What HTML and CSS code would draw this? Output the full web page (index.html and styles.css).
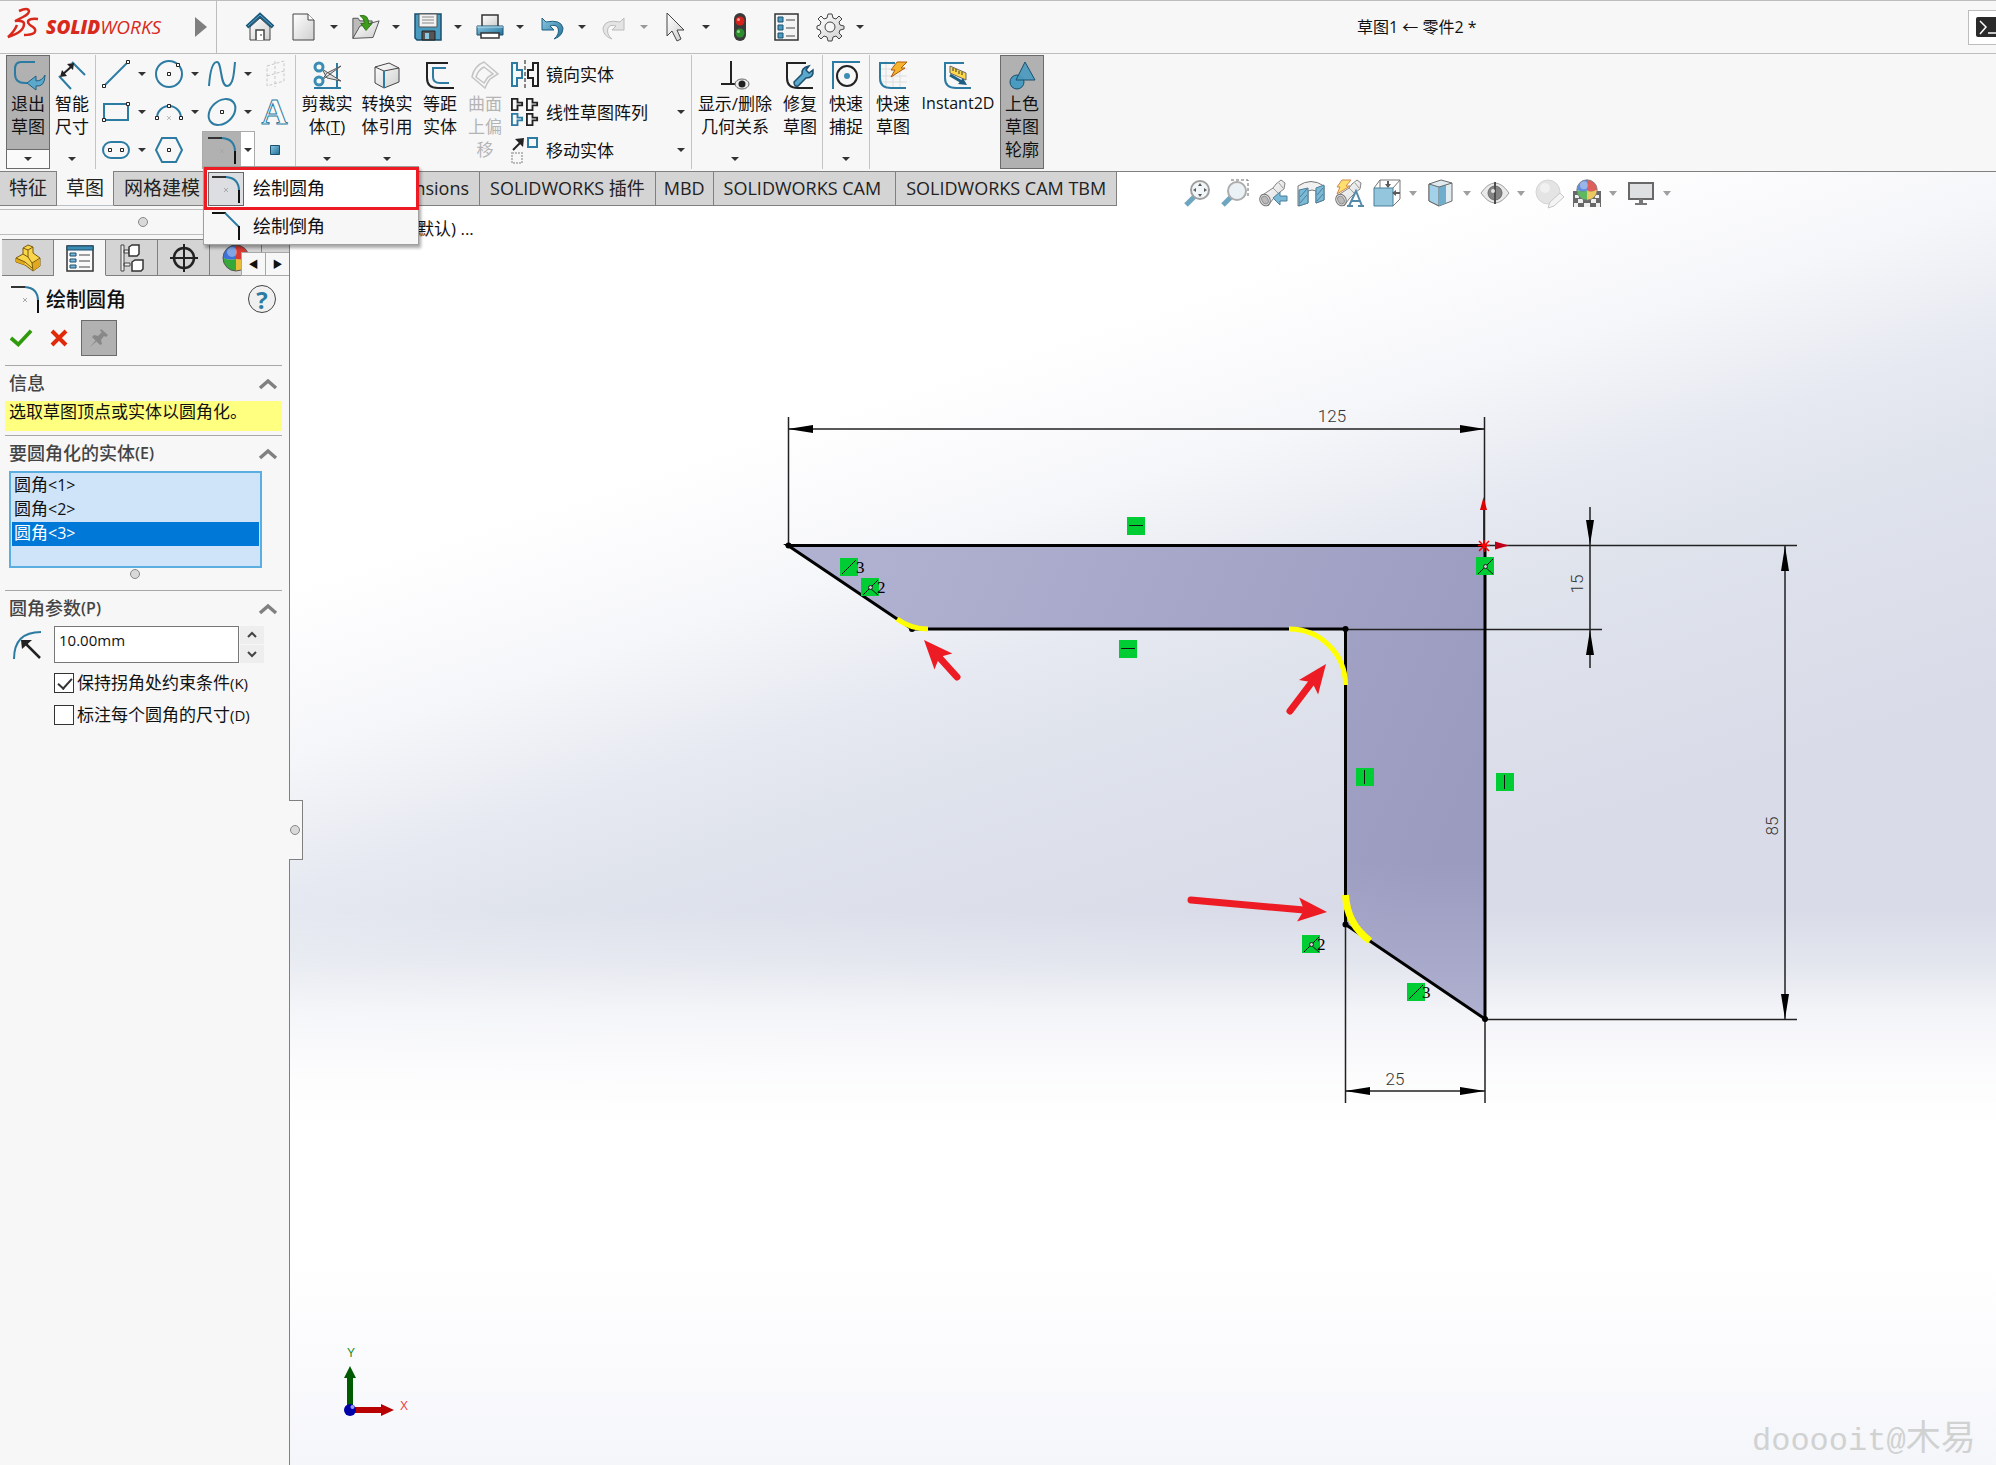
FILE: index.html
```html
<!DOCTYPE html>
<html lang="zh-CN">
<head>
<meta charset="utf-8">
<title>草图1 ← 零件2 *</title>
<link rel="stylesheet" href="styles.css">
</head>
<body>
<svg class="defs" aria-hidden="true">
  <defs>
    <linearGradient id="blue" x1="0" y1="0" x2="1" y2="1"><stop offset="0" stop-color="#8cc8e4"/><stop offset="1" stop-color="#1f6f96"/></linearGradient>
    <linearGradient id="grey" x1="0" y1="0" x2="1" y2="1"><stop offset="0" stop-color="#ffffff"/><stop offset="1" stop-color="#cfcfcf"/></linearGradient>
    <symbol id="i-fillet" viewBox="0 0 28 28"><path d="M0 2h14" stroke="#333" stroke-width="2" fill="none"/><path d="M14 2q13 1 13 14" stroke="#2b7ba3" stroke-width="2" fill="none"/><path d="M27 15v13" stroke="#111" stroke-width="2"/><path d="M12 13l4 4m0-4l-4 4" stroke="#a8a8a8"/></symbol>
    <symbol id="i-block" viewBox="0 0 14 14"><path d="M1 1h6v4h5v3H7v5H1z" fill="none" stroke-width="2" stroke="currentColor"/></symbol>
    <symbol id="i-scope" viewBox="0 0 28 28"><path d="M2 17L14 9l3-4 5-4 4 3-1 6-4 3-7 7-5 7z" fill="url(#grey)" stroke="#666"/><path d="M14 9l6 6M20 4l4 5" stroke="#888" fill="none"/><ellipse cx="6" cy="21" rx="5" ry="6" transform="rotate(-30 6 21)" fill="#ddd" stroke="#555"/><ellipse cx="6" cy="21" rx="3" ry="4" transform="rotate(-30 6 21)" fill="#aaa" stroke="#777"/></symbol>
    <symbol id="i-ball" viewBox="0 0 28 28"><path d="M14 1A13 13 0 0 0 1 14q6 3 13 1z" fill="#3d73d8"/><path d="M14 1a13 13 0 0 1 13 13q-6 3-13 1z" fill="#d63a32"/><path d="M1 14a13 13 0 0 0 13 13V15q-7 2-13-1z" fill="#36a83a"/><path d="M27 14a13 13 0 0 1-13 13V15q7 2 13-1z" fill="#e9bc3a"/><circle cx="10" cy="8" r="5" fill="#fff" opacity=".35"/><circle cx="14" cy="14" r="13" fill="none" stroke="#555"/></symbol>
  </defs>
</svg>

<div class="app">
  <header class="titlebar">
    <div class="brand">
      <svg class="brand-mark" viewBox="0 0 32 32"><path d="M11 3Q20-1 21 3q0 3-6 6l-8 4q9-1 9 3 0 8-16 13 6-5 9-12M30 11q-10-1-10 3 0 2 5 5 4 3 1 6-3 2-10 2" fill="none" stroke="#d9291c" stroke-width="2.500"/></svg>
      <span class="brand-name"><b>SOLID</b><span>WORKS</span></span>
      <button class="brand-more" aria-label="菜单"></button>
    </div>
    <nav class="quick">
      <button class="ico solo" aria-label="主页"><svg viewBox="0 0 28 28"><path d="M4 14v13h20V14L14 5z" fill="url(#grey)" stroke="#444"/><path d="M1 14L14 2l13 12" fill="none" stroke="#1d5a7d" stroke-width="4"/><path d="M2 13L14 2l12 11" fill="none" stroke="#5aa9cc" stroke-width="1"/><path d="M10 27V17h8v10" fill="#fff" stroke="#444" stroke-width="1.5"/><path d="M15 21v2" stroke="#333"/></svg></button>
      <div class="pair"><button class="ico" aria-label="新建"><svg viewBox="0 0 28 28"><path d="M3 1h15l6 6v20H3z" fill="url(#grey)" stroke="#444"/><path d="M18 1v6h6" fill="#fff" stroke="#444"/></svg></button><button class="caret" aria-label="更多"></button></div>
      <div class="pair"><button class="ico" aria-label="打开"><svg viewBox="0 0 32 28"><path d="M1 27V4h6l2 3h14v5" fill="#bbb" stroke="#444"/><path d="M1 27L9 13l22-6-7 19z" fill="url(#grey)" stroke="#444"/><path d="M9 1q10-2 10 9h4l-7 8-6-8h4q0-6-5-9z" fill="#3e9c1d" stroke="#2b6e12"/></svg></button><button class="caret" aria-label="更多"></button></div>
      <div class="pair"><button class="ico" aria-label="保存"><svg viewBox="0 0 28 28"><path d="M1 1h26v26H3l-2-2z" fill="#4a9bc0" stroke="#1b4f6e" stroke-width="1.5"/><path d="M5 1h18v13H5z" fill="#f2f2f2" stroke="#555"/><path d="M8 4h12M8 7h12M8 10h12" stroke="#888"/><path d="M8 18h13v9H8z" fill="#555" stroke="#222"/><path d="M11 20h4v6h-4z" fill="#8cc8e4"/></svg></button><button class="caret" aria-label="更多"></button></div>
      <div class="pair"><button class="ico" aria-label="打印"><svg viewBox="0 0 28 28"><path d="M6 13V2h16v11" fill="url(#grey)" stroke="#333" stroke-width="1.5"/><path d="M1 13h26v9H1z" fill="url(#blue)" stroke="#1b4f6e"/><path d="M1 14h26" stroke="#b7def0"/><path d="M5 20h18v5H5z" fill="#fff" stroke="#333" stroke-width="1.5"/></svg></button><button class="caret" aria-label="更多"></button></div>
      <div class="pair"><button class="ico" aria-label="撤消"><svg viewBox="0 0 28 28"><path d="M4 5v12h12l-4-4q6-2 8 2 2 6-4 11 9-3 9-11Q23 6 8 9z" fill="url(#blue)" stroke="#1f5f82"/></svg></button><button class="caret" aria-label="更多"></button></div>
      <div class="pair off"><button class="ico" aria-label="重做" disabled><svg viewBox="0 0 28 28"><path d="M24 5v12H12l4-4q-6-2-8 2-2 6 4 11-9-3-9-11Q5 6 20 9z" fill="#e4e4e4" stroke="#bbb"/></svg></button><button class="caret" aria-label="更多" disabled></button></div>
      <div class="pair"><button class="ico" aria-label="选择"><svg viewBox="0 0 28 28"><path d="M5 0v23l5-5 5 10 4-2-4-9h7z" fill="url(#grey)" stroke="#444"/></svg></button><button class="caret" aria-label="更多"></button></div>
      <button class="ico solo" aria-label="重建模型"><svg viewBox="0 0 28 28"><rect x="8" y="0" width="12" height="28" rx="6" fill="#3a3a3a"/><circle cx="14" cy="8" r="4.500" fill="#d3231b"/><circle cx="14" cy="20" r="4.500" fill="#2e8b2e"/><circle cx="12.500" cy="6.500" r="1.500" fill="#f49a94"/><circle cx="12.500" cy="18.500" r="1.500" fill="#93d493"/></svg></button>
      <button class="ico solo" aria-label="文件属性"><svg viewBox="0 0 28 28"><path d="M3 1h23v26H3z" fill="#f4f4f4" stroke="#333" stroke-width="1.5"/><path d="M6 4h5v5H6zM6 12h5v5H6zM6 20h5v5H6z" fill="#4a9bc0" stroke="#1b4f6e"/><path d="M14 7h9M14 15h9M14 23h9" stroke="#444"/></svg></button>
      <div class="pair"><button class="ico" aria-label="选项"><svg viewBox="0 0 28 28"><path d="M12 1h4l1 4 3 1 3-3 3 3-3 3 1 3 4 1v3l-4 1-1 3 3 3-3 3-3-3-3 1-1 4h-4l-1-4-3-1-3 3-3-3 3-3-1-3-3-1v-3l3-1 1-3-3-3 3-3 3 3 3-1z" fill="url(#grey)" stroke="#444"/><circle cx="14" cy="14" r="5" fill="#f7f7f7" stroke="#444"/></svg></button><button class="caret" aria-label="更多"></button></div>
    </nav>
    <h1 class="doc-title">草图1 ← 零件2 *</h1>
    <button class="console" aria-label="命令"><svg viewBox="0 0 24 20"><rect width="24" height="20" rx="2" fill="#2a2a2a"/><path d="M4 4l6 6-6 7" fill="none" stroke="#fff" stroke-width="1.5"/><path d="M12 16h8" stroke="#fff" stroke-width="1.5"/></svg></button>
  </header>

  <section class="ribbon">
    <div class="group g-exit">
      <button class="big on split"><svg viewBox="0 0 28 28"><path d="M21 1H7Q1 1 1 8v5q0 9 10 9h2" fill="none" stroke="#2b7ba3" stroke-width="2"/><path d="M13 22l9-7v5q6 0 9-6 0 12-9 11v4z" fill="#5aa9cc" stroke="#1f5f82"/></svg><span>退出</span><span>草图</span><i class="tri"></i></button>
      <button class="big"><svg viewBox="0 0 28 28"><path d="M14 1l13 13M1 15l12 13" stroke="#2b7ba3" stroke-width="2"/><path d="M4 14L14 5" stroke="#222" stroke-width="2"/><path d="M16 2l-1 7-6-6zM2 16l2-7 5 6z" fill="#222"/></svg><span>智能</span><span>尺寸</span><i class="tri"></i></button>
    </div>
    <div class="group tools">
      <div class="tool"><button class="ico" aria-label="直线"><svg viewBox="0 0 28 28"><path d="M2 26L26 2" stroke="#2b7ba3" stroke-width="2"/><path d="M.5 24.500h3v3h-3zM24.500 .5h3v3h-3z" fill="#fff" stroke="#222"/></svg></button><button class="caret" aria-label="更多"></button></div>
      <div class="tool"><button class="ico" aria-label="圆"><svg viewBox="0 0 28 28"><circle cx="14" cy="14" r="13" fill="none" stroke="#2b7ba3" stroke-width="2"/><path d="M12.500 12.500h3v3h-3zM21.500 3.500h3v3h-3z" fill="#fff" stroke="#222"/></svg></button><button class="caret" aria-label="更多"></button></div>
      <div class="tool"><button class="ico" aria-label="样条曲线"><svg viewBox="0 0 28 28"><path d="M1 26C2 12 4 2 9 2s3 24 10 24c6 0 7-12 8-24" fill="none" stroke="#2b7ba3" stroke-width="2"/></svg></button><button class="caret" aria-label="更多"></button></div>
      <div class="tool"><button class="ico" aria-label="基准面"><svg viewBox="0 0 28 28"><path d="M6 6l17-5v20L6 26zM6 16l17-5M14 1v26" fill="none" stroke="#c8c8c8" stroke-dasharray="3 2"/></svg></button></div>
      <div class="tool"><button class="ico" aria-label="矩形"><svg viewBox="0 0 28 28"><path d="M2 6h24v16H2z" fill="none" stroke="#2b7ba3" stroke-width="2"/><path d="M.5 20.500h3v3h-3zM24.500 4.500h3v3h-3z" fill="#fff" stroke="#222"/></svg></button><button class="caret" aria-label="更多"></button></div>
      <div class="tool"><button class="ico" aria-label="圆弧"><svg viewBox="0 0 28 28"><path d="M2 20a12 12 0 0 1 24 0" fill="none" stroke="#2b7ba3" stroke-width="2"/><path d="M.5 18.500h3v3h-3zM24.500 18.500h3v3h-3zM12.500 6.500h3v3h-3z" fill="#fff" stroke="#222"/><path d="M12 18l4 4m0-4l-4 4" stroke="#bbb"/></svg></button><button class="caret" aria-label="更多"></button></div>
      <div class="tool"><button class="ico" aria-label="椭圆"><svg viewBox="0 0 28 28"><ellipse cx="14" cy="14" rx="15" ry="11" transform="rotate(-42 14 14)" fill="none" stroke="#2b7ba3" stroke-width="2"/><path d="M12.500 12.500h3v3h-3z" fill="#fff" stroke="#222"/></svg></button><button class="caret" aria-label="更多"></button></div>
      <div class="tool"><button class="ico glyph" aria-label="文字">A</button></div>
      <div class="tool"><button class="ico" aria-label="槽口"><svg viewBox="0 0 28 28"><rect x="1" y="6" width="26" height="16" rx="8" fill="none" stroke="#2b7ba3" stroke-width="2"/><path d="M6.500 12.500h3v3h-3zM18.500 12.500h3v3h-3z" fill="#fff" stroke="#222"/></svg></button><button class="caret" aria-label="更多"></button></div>
      <div class="tool"><button class="ico" aria-label="多边形"><svg viewBox="0 0 28 28"><path d="M7 2h14l6 12-6 12H7L1 14z" fill="none" stroke="#2b7ba3" stroke-width="2"/><path d="M12.500 12.500h3v3h-3z" fill="#fff" stroke="#222"/></svg></button></div>
      <div class="tool open">
        <button class="ico" aria-label="绘制圆角"><svg><use href="#i-fillet"/></svg></button><button class="caret" aria-label="更多"></button>
        <div class="menu">
          <button class="menu-item marked"><span class="menu-ico"><svg><use href="#i-fillet"/></svg></span>绘制圆角</button>
          <button class="menu-item"><span class="menu-ico"><svg viewBox="0 0 28 28"><path d="M0 1h14" stroke="#111" stroke-width="2"/><path d="M13 1l14 14" stroke="#2b7ba3" stroke-width="2"/><path d="M27 14v14" stroke="#111" stroke-width="2"/></svg></span>绘制倒角</button>
        </div>
      </div>
      <div class="tool"><button class="ico" aria-label="点"><svg viewBox="0 0 28 28"><path d="M9.500 9.500h9v9h-9z" fill="url(#blue)" stroke="#1b4f6e"/></svg></button></div>
    </div>
    <div class="group g-edit">
      <button class="big w60"><svg viewBox="0 0 28 28"><path d="M1 27h27M24 2v26" stroke="#2b7ba3" stroke-width="2"/><path d="M9 8l19 12-14-3zM9 19L28 5 14 12z" fill="#ddd" stroke="#555"/><circle cx="6" cy="6" r="4" fill="none" stroke="#3c8db3" stroke-width="3"/><circle cx="6" cy="20" r="4" fill="none" stroke="#3c8db3" stroke-width="3"/></svg><span>剪裁实</span><span>体(<u>T</u>)</span><i class="tri"></i></button>
      <button class="big w60"><svg viewBox="0 0 28 28"><path d="M2 6l14-4 10 5v14l-15 6-9-5z" fill="url(#grey)" stroke="#444"/><path d="M2 6l9 4 15-3" fill="none" stroke="#444"/><path d="M11 10v17" stroke="#2b7ba3" stroke-width="2"/></svg><span>转换实</span><span>体引用</span><i class="tri"></i></button>
      <button class="big w46"><svg viewBox="0 0 28 28"><path d="M22 2H1v15q0 10 11 10h16" fill="none" stroke="#222" stroke-width="2"/><path d="M20 7H7v9q0 6 7 6h9" fill="none" stroke="#2b7ba3" stroke-width="2"/></svg><span>等距</span><span>实体</span></button>
      <button class="big off" disabled><svg viewBox="0 0 28 28"><path d="M13 1l14 12-8 5q-3 4-5 9L1 16Q3 5 13 1zM13 6l9 7-5 3-4 6-8-6q2-7 8-10z" fill="none" stroke="#c4c4c4" stroke-width="1.5"/></svg><span>曲面</span><span>上偏</span><span>移</span></button>
      <div class="rows">
        <div class="row"><button class="row-main"><svg viewBox="0 0 28 28"><path d="M1 3h5v7h5v8H6v8H1z" fill="none" stroke="#2b7ba3" stroke-width="2"/><path d="M27 3h-5v7h-5v8h5v8h5z" fill="none" stroke="#222" stroke-width="2"/><path d="M14 0v28" stroke="#111" stroke-dasharray="4 2" stroke-width="1"/></svg>镜向实体</button></div>
        <div class="row"><button class="row-main"><svg viewBox="0 0 28 28"><g color="#222"><use href="#i-block" width="13" height="13"/><use href="#i-block" x="15" width="13" height="13"/><use href="#i-block" x="15" y="15" width="13" height="13"/></g><g color="#2b7ba3"><use href="#i-block" y="15" width="13" height="13"/></g></svg>线性草图阵列</button><button class="caret" aria-label="更多"></button></div>
        <div class="row"><button class="row-main"><svg viewBox="0 0 28 28"><path d="M2 14L10 6" stroke="#222" stroke-width="2"/><path d="M13 2l-1 9-8-8z" fill="#222"/><path d="M17 2h9v9h-9z" fill="none" stroke="#2b7ba3" stroke-width="2"/><path d="M1 17h10v10H1z" fill="none" stroke="#bbb" stroke-width="2" stroke-dasharray="2 1"/></svg>移动实体</button><button class="caret" aria-label="更多"></button></div>
      </div>
    </div>
    <div class="group">
      <button class="big w86"><svg viewBox="0 0 28 28"><path d="M10 0v23M0 23h16" stroke="#222" stroke-width="2"/><ellipse cx="21" cy="23" rx="7" ry="5" fill="#eee" stroke="#666"/><circle cx="21" cy="23" r="3.500" fill="#222"/></svg><span>显示/删除</span><span>几何关系</span><i class="tri"></i></button>
      <button class="big"><svg viewBox="0 0 28 28"><path d="M20 2H1v15q0 10 11 10h15" fill="none" stroke="#222" stroke-width="2"/><path d="M8 21l8-8q-1-6 7-8l-3 4 3 3 4-3q1 8-7 8l-8 8q-4 1-4-4z" fill="#5aa9cc" stroke="#1f4f6e" stroke-width="1.500"/></svg><span>修复</span><span>草图</span></button>
    </div>
    <div class="group">
      <button class="big w46"><svg viewBox="0 0 28 28"><path d="M1 28V1h27" fill="none" stroke="#2b7ba3" stroke-width="2"/><circle cx="15" cy="15" r="10" fill="none" stroke="#222" stroke-width="2"/><circle cx="15" cy="15" r="3" fill="#3c8db3"/></svg><span>快速</span><span>捕捉</span><i class="tri"></i></button>
    </div>
    <div class="group last">
      <button class="big w46"><svg viewBox="0 0 28 28"><path d="M0 8h28M0 15h28M0 21h28M7 0v28M14 0v28M21 0v28" stroke="#ddd"/><path d="M16 2H1v15q0 10 11 10h15" fill="none" stroke="#2b7ba3" stroke-width="2"/><path d="M18 1h10l-6 6h4L12 16l4-7h-4z" fill="#f6b42c" stroke="#b05a10"/></svg><span>快速</span><span>草图</span></button>
      <button class="big w84 latin"><svg viewBox="0 0 28 28"><path d="M20 2H1v15q0 10 11 10h15" fill="none" stroke="#2b7ba3" stroke-width="2"/><path d="M6 5l16 7v7L6 12z" fill="#ffd84a" stroke="#666"/><path d="M9 7v3M12 8v3M15 10v3M18 11v3" stroke="#333"/><path d="M6 14l12 7" stroke="#1f5f82" stroke-width="3"/><path d="M23 24l-9-1 5-6z" fill="#1f5f82"/></svg><span>Instant2D</span></button>
      <button class="big on"><svg viewBox="0 0 28 28"><circle cx="9" cy="21" r="7" fill="#4a9bc0" stroke="#1b4f6e"/><path d="M17 1l10 18H8z" fill="#4a9bc0" fill-opacity=".9" stroke="#1b4f6e"/></svg><span>上色</span><span>草图</span><span>轮廓</span></button>
    </div>
  </section>

  <div class="work">
    <div class="tabrow">
      <nav class="tabs">
        <a href="#" class="tab cjk">特征</a><a href="#" class="tab cjk active">草图</a><a href="#" class="tab cjk mesh">网格建模</a><a href="#" class="tab dims">MBD Dimensions</a><a href="#" class="tab">SOLIDWORKS 插件</a><a href="#" class="tab mbd">MBD</a><a href="#" class="tab cam">SOLIDWORKS CAM</a><a href="#" class="tab">SOLIDWORKS CAM TBM</a>
      </nav>
      <div class="hud">
        <button class="ico" aria-label="整屏显示全图"><svg viewBox="0 0 28 28"><path d="M3 26l8-8" stroke="#4a8fb0" stroke-width="5"/><circle cx="17" cy="11" r="9" fill="#eef5f8" stroke="#888" stroke-width="2"/><path d="M17 4l2 3h-4zM17 18l2-3h-4zM10 11l3-2v4zM24 11l-3-2v4z" fill="#333"/></svg></button>
        <button class="ico" aria-label="局部放大"><svg viewBox="0 0 28 28"><path d="M10 1h17v17" fill="none" stroke="#444" stroke-dasharray="3 2"/><path d="M2 26l8-8" stroke="#4a8fb0" stroke-width="5"/><circle cx="16" cy="12" r="9" fill="#e6f0f5" stroke="#999" stroke-width="2"/></svg></button>
        <button class="ico" aria-label="上一视图"><svg viewBox="0 0 28 28"><use href="#i-scope"/><path d="M14 19l7-6v4h7v5h-7v4z" fill="#5aa9cc" stroke="#1f5f82"/></svg></button>
        <button class="ico" aria-label="剖面视图"><svg viewBox="0 0 28 28"><path d="M1 7q13-9 26 0v14l-8 3V12q-4-2-8 0v12l-10 3z" fill="#eee" stroke="#555"/><path d="M2 11l9-2v15l-9 3zM19 9l8-3v15l-8 3z" fill="#5aa9cc" stroke="#1f5f82"/><path d="M3 18l7-8M3 24l7-8M20 16l6-7M20 22l6-7" stroke="#1f5f82"/></svg></button>
        <button class="ico" aria-label="动态注解视图"><svg viewBox="0 0 28 28"><use href="#i-scope"/><path d="M7 1h9l-5 6h4L2 15l3-7H2z" fill="#ffd84a" stroke="#c86a20"/><path d="M14 27l7-15 6 15M17 22h8M12 27h6M23 27h6" fill="none" stroke="#2b6f94" stroke-width="2"/></svg></button>
        <div class="pair"><button class="ico" aria-label="视图定向"><svg viewBox="0 0 28 28"><path d="M1 9l6-8h20v19l-7 7M20 9l7-8M7 1v8" fill="none" stroke="#555"/><path d="M1 9h19v18H1z" fill="#7ab8d6" stroke="#1f5f82"/><path d="M15 2v6M27 14h-6" stroke="#333" stroke-width="2"/><path d="M15 9l-3-4h6zM19 14l4-3v6z" fill="#333"/></svg></button><button class="caret" aria-label="更多"></button></div>
        <div class="pair"><button class="ico" aria-label="显示样式"><svg viewBox="0 0 28 28"><path d="M2 5l12-4 11 3v18l-13 5-10-5z" fill="#d8e6ee" stroke="#444"/><path d="M2 5l10 3v19L2 22z" fill="#8cc8e4" stroke="#444"/><path d="M12 8l7-2v18l-7 3z" fill="#4a9bc0"/><path d="M12 8l13-4" stroke="#444"/></svg></button><button class="caret" aria-label="更多"></button></div>
        <div class="pair"><button class="ico" aria-label="隐藏/显示项目"><svg viewBox="0 0 28 28"><path d="M0 14Q14-6 28 14 14 34 0 14z" fill="#e6e6e6" stroke="#888"/><circle cx="14" cy="14" r="7" fill="#666" stroke="#444"/><path d="M14 3v22" stroke="#222" stroke-width="2"/><circle cx="12" cy="12" r="2" fill="#ddd"/></svg></button><button class="caret" aria-label="更多"></button></div>
        <button class="ico" aria-label="编辑外观" disabled><svg viewBox="0 0 28 28"><circle cx="13" cy="13" r="12" fill="#dedede" stroke="#ccc"/><circle cx="10" cy="9" r="5" fill="#eee"/><path d="M13 29l2-6 10-9 4 4-10 9z" fill="#f2f2f2" stroke="#bbb"/></svg></button>
        <div class="pair"><button class="ico" aria-label="应用布景"><svg viewBox="0 0 28 28"><path d="M0 12h28v16H0z" fill="#444"/><path d="M2 16h4v3H2zM22 16h4v3h-4zM5 20h5v4H5zM18 20h5v4h-5zM11 24h6v4h-6zM1 24h4v4H1zM23 24h4v4h-4z" fill="#eee"/><use href="#i-ball" x="3" y="0" width="22" height="22"/></svg></button><button class="caret" aria-label="更多"></button></div>
        <div class="pair"><button class="ico" aria-label="视图设定"><svg viewBox="0 0 28 28"><path d="M2 4h24v16H2z" fill="#d8dadb" stroke="#444" stroke-width="2"/><path d="M12 20h4v4h4v2H8v-2h4z" fill="#555"/></svg></button><button class="caret" aria-label="更多"></button></div>
      </div>
    </div>

    <div class="body">
      <aside class="panel">
        <div class="grip"><i class="dot"></i></div>
        <div class="ptabs">
          <button class="ptab" aria-label="特征树"><svg viewBox="0 0 28 28"><path d="M2 14l7-4V4l5-3 5 2v6l7 5v8l-7 5-8-6-9-3z" fill="#f9d54a" stroke="#7a5a10"/><path d="M2 14l9 4v3L2 18zM18 19l8-4v7l-7 5z" fill="#e0a81c"/><path d="M2 14l9 4 7 6M9 4l5 2v7M14 6l5-3M9 10l5 3 4 6 8-5M18 19l1 8" fill="none" stroke="#7a5a10"/></svg></button>
          <button class="ptab active" aria-label="属性"><svg viewBox="0 0 28 28"><path d="M1 2h26v25H1z" fill="#fafafa" stroke="#333" stroke-width="1.500"/><path d="M1 2h26v4H1z" fill="#3c8db3" stroke="#1b4f6e"/><path d="M4 9h6v3H4zM4 15h6v3H4zM4 21h6v3H4z" fill="#7ab8d6" stroke="#1b4f6e"/><path d="M13 11h11M13 17h11M13 23h11" stroke="#444"/></svg></button>
          <button class="ptab" aria-label="配置"><svg viewBox="0 0 28 28"><path d="M3 1h3v26H3zM6 6h5v3H6zM6 19h6v3H6z" fill="#eee" stroke="#444"/><path d="M11 3l3-2h7v9l-2 2h-8zM14 18l3-2h8v9l-2 2h-9z" fill="#fff" stroke="#333" stroke-width="1.500"/></svg></button>
          <button class="ptab" aria-label="尺寸专家"><svg viewBox="0 0 28 28"><circle cx="14" cy="14" r="10" fill="none" stroke="#222" stroke-width="2.500"/><path d="M14 0v28M0 14h28" stroke="#222" stroke-width="2"/></svg></button>
          <button class="ptab" aria-label="外观"><svg viewBox="0 0 28 28"><use href="#i-ball"/></svg></button>
          <div class="pscroll"><button aria-label="向左">◀</button><button aria-label="向右">▶</button></div>
        </div>

        <div class="phead">
          <svg class="phead-ico"><use href="#i-fillet"/></svg>
          <h2>绘制圆角</h2>
          <button class="help" aria-label="帮助">?</button>
        </div>
        <div class="pactions">
          <button class="act" aria-label="确定"><svg viewBox="0 0 24 20"><path d="M1 10l8 7L23 2" fill="none" stroke="#2f9a0c" stroke-width="4"/></svg></button>
          <button class="act" aria-label="取消"><svg viewBox="0 0 20 20"><path d="M3 3l14 14M17 3L3 17" stroke="#e02a0a" stroke-width="4"/></svg></button>
          <button class="pin" aria-label="保持可见"><svg viewBox="0 0 20 20"><path d="M12 1l7 6-2 2-2-1-3 4 1 4-2 1-8-8 2-2 4 1 4-4-2-1zM7 12l1 1-7 6z" fill="#888"/></svg></button>
        </div>

        <section class="sect">
          <h3>信息<button class="chev" aria-label="折叠"><svg viewBox="0 0 18 12"><path d="M1 10l8-7 8 7" fill="none" stroke="#808080" stroke-width="3.500"/></svg></button></h3>
          <p class="note">选取草图顶点或实体以圆角化。</p>
        </section>
        <section class="sect">
          <h3>要圆角化的实体<small>(E)</small><button class="chev" aria-label="折叠"><svg viewBox="0 0 18 12"><path d="M1 10l8-7 8 7" fill="none" stroke="#808080" stroke-width="3.500"/></svg></button></h3>
          <ul class="list" role="listbox">
            <li role="option">圆角<small>&lt;1&gt;</small></li>
            <li role="option">圆角<small>&lt;2&gt;</small></li>
            <li role="option" aria-selected="true">圆角<small>&lt;3&gt;</small></li>
          </ul>
          <div class="list-grip"><i class="dot"></i></div>
        </section>
        <section class="sect">
          <h3>圆角参数<small>(P)</small><button class="chev" aria-label="折叠"><svg viewBox="0 0 18 12"><path d="M1 10l8-7 8 7" fill="none" stroke="#808080" stroke-width="3.500"/></svg></button></h3>
          <div class="radius">
            <svg viewBox="0 0 28 28"><path d="M1 28Q1 1 28 1" fill="none" stroke="#2b7ba3" stroke-width="2"/><path d="M27 27L13 13" stroke="#222" stroke-width="2.500"/><path d="M8 9h11l-10 9z" fill="#222"/></svg>
            <input type="text" value="10.00mm" aria-label="圆角半径">
            <div class="spin"><button aria-label="增加"><svg viewBox="0 0 10 8"><path d="M1 6l4-4 4 4" fill="none" stroke="#444" stroke-width="2"/></svg></button><button aria-label="减少"><svg viewBox="0 0 10 8"><path d="M1 2l4 4 4-4" fill="none" stroke="#444" stroke-width="2"/></svg></button></div>
          </div>
          <label class="check"><input type="checkbox" checked><span>保持拐角处约束条件<small>(K)</small></span></label>
          <label class="check"><input type="checkbox"><span>标注每个圆角的尺寸<small>(D)</small></span></label>
        </section>
        <button class="handle" aria-label="折叠面板"><i class="dot"></i></button>
      </aside>

      <main class="view">
        <span class="tree">默认) ...</span>
        <svg class="sketch" viewBox="290 206 1706 1259">
          <defs>
            <linearGradient id="face" gradientUnits="userSpaceOnUse" x1="900" y1="500" x2="1480" y2="760"><stop offset="0" stop-color="#b0b0d0"/><stop offset="1" stop-color="#9b9bc0"/></linearGradient>
            <linearGradient id="fade" gradientUnits="userSpaceOnUse" x1="0" y1="860" x2="0" y2="1020"><stop offset="0" stop-color="#b0b0d0" stop-opacity="0"/><stop offset="1" stop-color="#b0b0d0"/></linearGradient>
            <path id="dart" d="M0 0L-25-4V4z"/>
            <g id="eq"><path d="M0 0h18v18H0z" fill="#00cc33"/><path d="M2 16L16 2" stroke="#111" fill="none"/></g>
            <g id="co"><path d="M0 0h18v18H0z" fill="#00cc33"/><path d="M2 17L17 2M9 10l8 7" stroke="#111" fill="none"/><circle cx="9.500" cy="9.500" r="2" fill="#ccc" stroke="#222"/></g>
            <path id="head" d="M0 0L-29-12-23 0-29 12z" fill="#ed1c24"/>
          </defs>
          <path d="M788 545.500H1485V1019L1345.500 924.500V629H912z" fill="url(#face)"/>
          <path d="M1345.500 860H1485V1019L1345.500 924.500z" fill="url(#fade)"/>
          <g stroke="#222" stroke-width="1.500">
            <path d="M788.500 417V545M788 429H1485M1484.500 417V545M1485 545.500H1797M1346 629.500H1602M1590 507V668M1785 545V1019M1485 1019.500H1797M1345.500 924V1103M1485 1019V1103M1345 1091H1485"/>
          </g>
          <path d="M788 545.500H1485V1019L1345.500 924.500V629H912z" fill="none" stroke="#000" stroke-width="3"/>
          <g><circle cx="788.500" cy="545.500" r="3"/><circle cx="912" cy="629" r="3"/><circle cx="1345.500" cy="629" r="3"/><circle cx="1345.500" cy="924.500" r="3"/><circle cx="1485" cy="1019" r="3"/></g>
          <g>
            <use href="#dart" transform="translate(788 429) rotate(180)"/><use href="#dart" transform="translate(1485 429)"/>
            <use href="#dart" transform="translate(1590 545) rotate(90)"/><use href="#dart" transform="translate(1590 630) rotate(-90)"/>
            <use href="#dart" transform="translate(1785 546) rotate(-90)"/><use href="#dart" transform="translate(1785 1019) rotate(90)"/>
            <use href="#dart" transform="translate(1345 1091) rotate(180)"/><use href="#dart" transform="translate(1485 1091)"/>
          </g>
          <g class="dim">
            <text x="1332" y="422">125</text><text x="1395" y="1085">25</text>
            <text transform="translate(1583 584) rotate(-90)">15</text><text transform="translate(1778 826) rotate(-90)">85</text>
          </g>
          <g fill="none" stroke="#ff0">
            <path d="M897 619Q911 629 928 629" stroke-width="5"/><path d="M1289 629A56 56 0 0 1 1345.500 685" stroke-width="5"/><path d="M1345.500 895Q1347 924 1370 941" stroke-width="7"/>
          </g>
          <g fill="#00cc33"><path d="M1127 517h18v18h-18zM1119 640h18v18h-18zM1356 768h18v18h-18zM1496 773h18v18h-18z"/></g>
          <path d="M1129 525.500h14M1121 648.500h14M1364.500 770v14M1504.500 775v14" stroke="#111" stroke-width="1"/>
          <use href="#eq" x="840" y="558"/><use href="#co" x="861" y="578"/><use href="#co" x="1476" y="557"/><use href="#co" x="1302" y="935"/><use href="#eq" x="1407" y="983"/>
          <g class="idx"><text x="856" y="573">3</text><text x="877" y="593">2</text><text x="1317" y="950">2</text><text x="1422" y="998">3</text></g>
          <path d="M1483.500 510V545" stroke="#2a1ad0"/><path d="M1480 510l3.500-13 3.500 13z" fill="#e00000"/><path d="M1495 541.500l14 4-14 4z" fill="#c00018"/>
          <path d="M1478 545.500h12M1484 540v12M1479 541l10 10M1489 541l-10 10" stroke="#f00" stroke-width="1.500"/>
          <g stroke="#ed1c24" stroke-width="7" stroke-linecap="round"><path d="M957 677L938 656M1290 711L1312 682M1191 900L1304 910"/></g>
          <use href="#head" transform="translate(924 640) rotate(228)"/><use href="#head" transform="translate(1326 664) rotate(-53)"/><use href="#head" transform="translate(1327 912) rotate(5)"/>
          <path d="M347 1408V1378h-3l6-12 6 12h-3v30z" fill="#005a00"/><path d="M352 1407h29v-3l13 6-13 6v-3h-29z" fill="#b80000"/><circle cx="350" cy="1410" r="6" fill="#0000a8"/><circle cx="352.500" cy="1407" r="2" fill="#9a9af0"/>
          <g class="axis"><text x="351" y="1357" fill="#1a8a1a">Y</text><text x="404" y="1410" fill="#f04040">X</text></g>
          <text class="mark" x="1752" y="1450">dooooit@<tspan class="mark-cjk">木易</tspan></text>
        </svg>
      </main>
    </div>
  </div>
</div>
</body>
</html>
```
FILE: styles.css
```css
* { box-sizing: border-box; }
body {
  margin: 0;
  font: 17px/23px "Open Sans", "Noto Sans CJK SC", sans-serif;
  color: #111;
  background: #f7f7f7;
}
h1, h2, h3, p, ul { margin: 0; padding: 0; }
button {
  display: flex;
  align-items: center;
  justify-content: center;
  margin: 0;
  padding: 0;
  border: 0;
  background: none;
  font: inherit;
  color: inherit;
}
svg { display: block; overflow: visible; }
i { font-style: normal; }
.defs { position: absolute; width: 0; height: 0; }
.app { display: flex; flex-direction: column; min-height: 100vh; }

.ico { width: 28px; height: 28px; flex: none; }
.ico svg { width: 28px; height: 28px; }
.caret { width: 8px; height: 28px; flex: none; }
.caret::before, .tri::before {
  content: "";
  border: 4px solid transparent;
  border-top-color: #333;
  border-bottom: 0;
}
.pair { display: flex; gap: 12px; }
.off { color: #b4b4b4; }
.off .caret::before { border-top-color: #999; }

/* title bar */
.titlebar {
  display: flex;
  align-items: center;
  height: 54px;
  border-top: 1px solid #bdbdbd;
  border-bottom: 1px solid #bdbdbd;
}
.brand {
  display: flex;
  align-items: center;
  align-self: stretch;
  width: 217px;
  padding-left: 8px;
  border-right: 1px solid #bdbdbd;
}
.brand-mark { width: 32px; height: 32px; margin-right: 6px; margin-bottom: 6px; }
.brand-name { font-size: 19px; font-style: italic; color: #d9291c; width: 149px; }
.brand-name b { font-weight: 800; }
.brand-more::before { content: ""; border: 10px solid transparent; border-left: 12px solid #7f7f7f; border-right: 0; }
.quick { display: flex; gap: 14px; padding-left: 27px; }
.quick .solo { margin: 0 2px; }
.doc-title { flex: 1; padding-left: 493px; font-size: 16px; font-weight: 400; }
.console {
  justify-content: flex-start;
  width: 28px;
  height: 35px;
  padding-left: 7px;
  overflow: hidden;
  border: 1px solid #bdbdbd;
  border-right: 0;
  background: #fff;
}
.console svg { width: 24px; height: 20px; flex: none; }

/* ribbon */
.ribbon { display: flex; height: 117px; padding: 1px 0 2px; }
.group { display: flex; border-right: 1px solid #c4c4c4; }
.group.last { border: 0; }
.g-exit { padding: 0 1px 0 6px; }
.g-edit { padding-left: 1px; }
.big {
  position: relative;
  flex-direction: column;
  justify-content: flex-start;
  width: 44px;
  padding-top: 6px;
}
.big svg { width: 28px; height: 28px; margin-bottom: 3px; flex: none; }
.big.latin { font-size: 16px; }
.big .tri { display: flex; align-items: center; justify-content: center; width: 100%; height: 20px; margin-top: auto; }
.big.on { background: #b1b1b1; outline: 1px solid #6b6b6b; outline-offset: -1px; }
.big.split .tri { background: #fafafa; border: 1px solid #6b6b6b; }
.w46 { width: 46px; }
.w60 { width: 60px; }
.w84 { width: 84px; }
.w86 { width: 86px; }
.tools { display: grid; grid-template-columns: 53px 53px 53px 40px; grid-template-rows: repeat(3, 38px); }
.tool { position: relative; display: flex; }
.tool > .ico { width: 39px; height: 38px; }
.tool > .caret { width: 14px; height: 38px; }
.tool.open { outline: 1px solid #aaa; outline-offset: -1px; background: #fff; }
.tool.open > .ico { background: #b1b1b1; }
.glyph { font: bold 36px/38px "Liberation Serif", serif; color: #fafafa; -webkit-text-stroke: 1px #2b7ba3; }
.rows { width: 184px; padding-left: 4px; }
.row { display: flex; justify-content: space-between; height: 38px; padding-right: 6px; }
.row-main { gap: 7px; }
.row-main svg { width: 28px; height: 28px; }
.row .caret { height: 38px; }

.menu {
  position: absolute;
  z-index: 5;
  top: 35px;
  left: 1px;
  width: 216px;
  height: 79px;
  background: #f7f7f7;
  border: 1px solid #a0a0a0;
  box-shadow: 2px 3px 3px #0005;
}
.menu-item { justify-content: flex-start; gap: 9px; width: 100%; height: 32px; padding-left: 4px; font-size: 18px; }
.menu-item.marked { width: 215px; height: 43px; padding-left: 2px; background: #fff; outline: 3px solid #ed1c24; outline-offset: -3px; }
.menu-ico { display: flex; align-items: center; justify-content: center; width: 36px; height: 34px; }
.menu-ico svg { width: 28px; height: 28px; }
.marked .menu-ico { margin-left: 2px; border: 1px solid #666; background: #dcdee2; }

/* tab row */
.work {
  flex: 1;
  display: flex;
  flex-direction: column;
  border-top: 1px solid #808080;
  background:
    linear-gradient(to bottom, #fff0 57%, #fff4 61%, #ffffffb0 65%, #ffffffea 70%, #fff 74%, #fff 84%, #f5f6fa 100%),
    linear-gradient(162deg, #fff 26%, #f5f6f9 35%, #e6e9f1 42%, #dfe3ec 47%, #d9dce8 60%);
}
.tabrow { display: flex; align-items: flex-start; height: 34px; }
.tabs { display: flex; height: 34px; }
.tab {
  display: flex;
  align-items: center;
  justify-content: center;
  padding: 0 10px;
  font-size: 18px;
  color: #222;
  text-decoration: none;
  background: #d4d4d4;
  border-right: 1px solid #808080;
  border-bottom: 1px solid #808080;
  white-space: nowrap;
}
.tab.cjk { font-size: 19px; padding: 0 9px; }
.tab.active { background: #f7f7f7; margin-top: -1px; border-bottom-color: #b9c0c6; }
.tab.mesh { padding: 0 10px; }
.tab.dims { width: 269px; justify-content: flex-end; }
.tab.mbd { padding: 0 8px; }
.tab.cam { padding: 0 14px 0 10px; }
.hud { display: flex; gap: 10px; margin: 7px 0 0 66px; opacity: .8; }
.hud .pair { gap: 8px; }
.hud .caret::before { border-width: 5px 4px 0; border-top-color: #888; }

/* property panel */
.body { flex: 1; display: grid; grid-template-columns: 290px 1fr; }
.panel { position: relative; padding-top: 3px; background: #f7f7f7; border-right: 1px solid #808080; }
.grip { display: flex; align-items: center; justify-content: center; height: 26px; padding-right: 4px; border: solid #bdbdbd; border-width: 1px 0; }
.dot { width: 10px; height: 10px; border: 1px solid #888; border-radius: 50%; background: #d9d9d9; }
.ptabs { position: relative; display: flex; height: 37px; margin: 4px 0 0 2px; background: #d4d4d4; overflow: hidden; }
.ptab { width: 52px; flex: none; border: solid #808080; border-width: 1px 1px 1px 0; background: #d4d4d4; }
.ptab.active { background: #f7f7f7; border-bottom-color: #f7f7f7; }
.ptab svg { width: 28px; height: 28px; }
.pscroll { position: absolute; right: 0; bottom: 0; display: flex; }
.pscroll button { width: 24px; height: 24px; font-size: 10px; border: solid #a8a8a8; border-width: 1px 0 1px 1px; background: #f7f7f7; }
.phead { display: flex; align-items: center; height: 44px; padding: 2px 13px 0 11px; }
.phead-ico { width: 28px; height: 28px; }
.phead h2 { flex: 1; padding-left: 7px; font-size: 20px; font-weight: 500; }
.help { width: 28px; height: 28px; border: 1px solid #444; border-radius: 50%; background: #f0f0f0; font-size: 24px; font-weight: 700; color: #2b7ba3; }
.pactions { display: flex; align-items: center; gap: 14px; height: 36px; margin-bottom: 9px; padding-left: 9px; }
.act { width: 24px; height: 24px; }
.act svg { width: 22px; height: 20px; }
.pin { width: 36px; height: 36px; margin-left: -4px; border: 1px solid #6b6b6b; background: #b1b1b1; }
.pin svg { width: 20px; height: 20px; }
.sect { margin: 0 7px 4px 5px; border-top: 1px solid #a8a8a8; }
.sect h3 { display: flex; align-items: center; height: 35px; padding: 0 4px; font-size: 18px; font-weight: 500; color: #444; }
.sect small { font-size: 15px; }
.sect h3 small { font-size: 16px; font-weight: 600; }
.chev { width: 20px; height: 20px; margin-left: auto; }
.chev svg { width: 18px; height: 12px; }
.note { height: 30px; padding-left: 4px; line-height: 22px; background: #ffff80; }
.list { width: 253px; height: 97px; margin-left: 4px; padding: 1px; list-style: none; border: 2px solid #5aaee0; background: #cfe4f8; }
.list li { height: 24px; padding-left: 2px; line-height: 22px; }
.list small { font-size: 16px; }
.list [aria-selected="true"] { color: #fff; background: #0078d7; }
.list-grip { display: flex; justify-content: center; height: 18px; padding: 1px 17px 0 0; }
.radius { display: flex; align-items: center; height: 37px; padding-left: 8px; }
.radius > svg { width: 28px; height: 28px; margin-right: 13px; }
.radius input { width: 185px; height: 37px; padding: 0 4px 10px; border: 1px solid #777; font: 15px/20px "Open Sans", sans-serif; color: #111; background: #fff; }
.spin { display: flex; flex-direction: column; gap: 1px; margin-left: 1px; }
.spin button { width: 24px; height: 18px; background: #eee; }
.spin svg { width: 10px; height: 8px; }
.check { display: flex; align-items: center; gap: 3px; height: 22px; margin: 9px 0 10px 49px; white-space: nowrap; }
.check input { appearance: none; width: 20px; height: 20px; margin: 0; border: 1px solid #333; background: #fff; flex: none; }
.check input:checked::after { content: ""; display: block; width: 6px; height: 12px; margin: 1px 0 0 6px; border: solid #333; border-width: 0 2px 2px 0; transform: rotate(42deg); }
.handle { position: absolute; z-index: 2; top: 594px; right: -14px; width: 14px; height: 60px; padding-right: 2px; border: 1px solid #808080; border-left: 0; background: #f7f7f7; }

/* graphics area */
.view { position: relative; min-width: 0; }
.tree { position: absolute; top: 11px; left: 127px; }
.sketch { width: 100%; height: auto; }
.dim { font: 300 17px "Roboto", "Liberation Sans", sans-serif; fill: #333; text-anchor: middle; }
.idx { font: 17px "Liberation Serif", serif; fill: #000; }
.axis { font: 12px "Liberation Sans", sans-serif; text-anchor: middle; }
.mark { font: 32px "Liberation Mono", "Noto Sans CJK SC", monospace; fill: #d0d2d2; }
.mark-cjk { font-size: 35px; }
```
